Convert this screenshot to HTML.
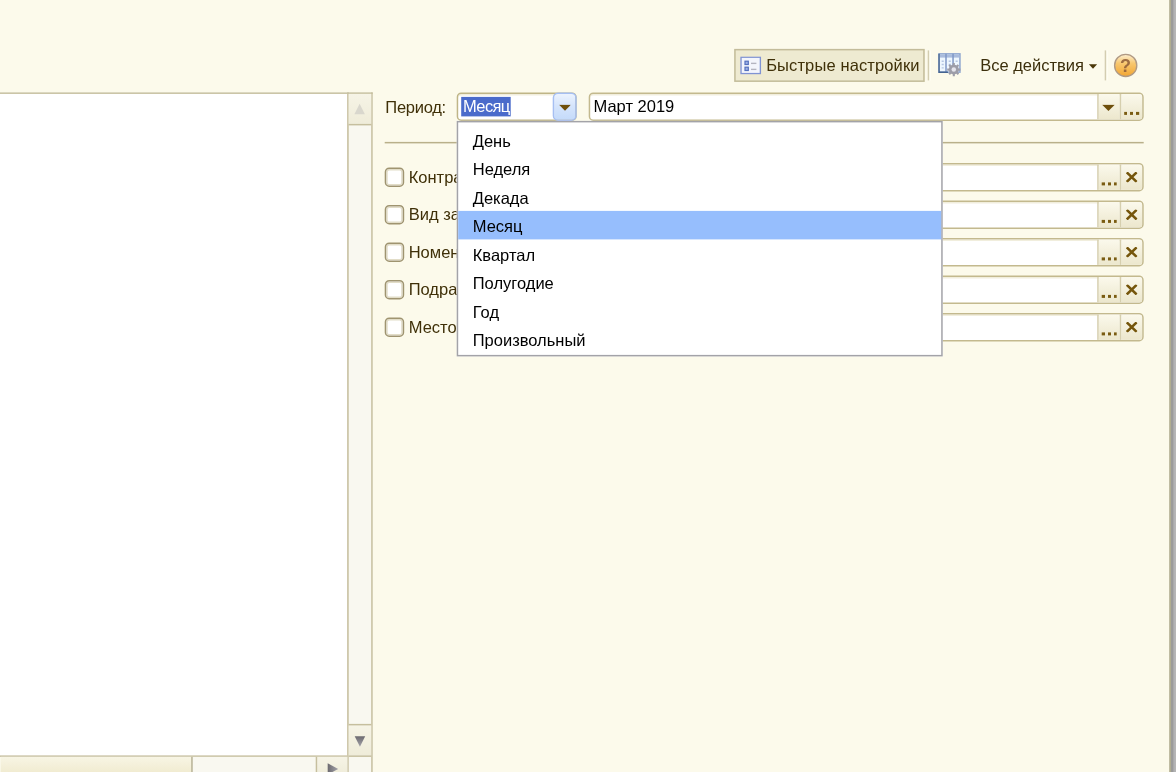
<!DOCTYPE html>
<html lang="ru">
<head>
<meta charset="utf-8">
<title>Отчет</title>
<style>
html,body{margin:0;padding:0;}
body{width:1176px;height:772px;overflow:hidden;background:#fcfaeb;position:relative;}
#root{position:absolute;left:0;top:0;width:784px;height:516px;transform:translate(0.7px,-0.6px) scale(1.5);transform-origin:0 0;will-change:transform;font-family:"Liberation Sans",sans-serif;font-size:11px;color:#3f3008;}
#root div,#root span,#root svg{position:absolute;box-sizing:border-box;}
.t{white-space:nowrap;line-height:19px;height:19px;margin-top:0.6px;}
/* window edge */
#edge{left:779px;top:-1px;width:6px;height:518px;background:linear-gradient(90deg,#b0ad90 0,#b0ad90 1px,#9b9b9a 1px,#9b9b9a 2.3px,#b1b1b4 3.2px,#b9b9b6 5px);}
/* left panel */
#panel{left:-3px;top:62px;width:235px;height:443px;background:#fff;border:1px solid #c6bf9e;}
#vsb{left:231px;top:62px;width:17px;height:456px;background:#f9f8f0;border:1px solid #c6bf9e;border-bottom:none;}
.sb{background:linear-gradient(#f6f4e6,#efecd9);}
#vup{left:0;top:0;width:15px;height:21px;border-bottom:1px solid #c6bf9e;}
#vdn{left:0;top:420px;width:15px;height:22px;border-top:1px solid #c6bf9e;border-bottom:1px solid #c6bf9e;}
#hsb{left:0;top:505px;width:231px;height:12px;background:#f9f8f0;}
#hth{left:0;top:0;width:128px;height:12px;background:linear-gradient(#f8f5e4,#eee8ca 14px);border-right:1px solid #b7b193;}
#hrt{left:210px;top:0;width:21px;height:12px;border-left:1px solid #c6bf9e;}
/* toolbar */
#qb{left:489px;top:33px;width:127px;height:22px;background:#eeead1;border:1px solid #c3bc9a;}
.vs{width:1px;background:#d3cdb0;box-shadow:1px 0 0 #fffef6;}
/* fields */
.f{height:19px;background:#fff;border:1px solid #c3b98e;border-radius:3px;box-shadow:inset 0 1px 0 #f1eedd;overflow:hidden;}
.b{top:0;height:17px;background:linear-gradient(#fbf9ec,#ece7cd);border-left:1px solid #d6cfae;}
.dots{left:3px;top:12px;width:10px;height:2px;background:linear-gradient(90deg,#7a5c12 0,#7a5c12 2px,transparent 2px,transparent 4px,#7a5c12 4px,#7a5c12 6px,transparent 6px,transparent 8px,#7a5c12 8px,#7a5c12 10px);}
.cb{left:256px;width:13px;height:13px;border:1px solid #9f9470;border-radius:3px;background:#fff;box-shadow:inset 0 0 0 1px #e2ddc8;}
.lb{left:272px;margin-top:0;transform:translateY(0.35px);}
#hr{left:255.5px;top:95px;width:506px;height:1px;background:#b9b08a;}
/* popup */
#pop{left:304.2px;top:81.1px;width:324px;height:157px;background:#fff;border:1px solid #a3a3a8;}
#pop div{left:0;width:322px;height:19px;}
#pop span{left:9.5px;top:1px;color:#000;white-space:nowrap;line-height:19px;transform:translateY(0.35px);}
</style>
</head>
<body>
<div id="root">
<div id="edge"></div>
<div id="panel"></div>
<div id="vsb">
  <div id="vup" class="sb"><svg width="15" height="20" viewBox="0 0 15 20"><path d="M7.3 6.6 L10.8 13.6 L3.8 13.6 Z" fill="#d9d7cd"/></svg></div>
  <div id="vdn" class="sb"><svg width="15" height="22" viewBox="0 0 15 22" style="top:-1px"><defs><linearGradient id="ag1" x1="0" y1="0" x2="0" y2="1"><stop offset="0" stop-color="#6c6a70"/><stop offset="1" stop-color="#a3a2a8"/></linearGradient></defs><path d="M4 8.2 L11 8.2 L7.5 15.2 Z" fill="url(#ag1)"/></svg></div>
</div>
<div id="hsb">
  <div id="hth"></div>
  <div id="hrt" class="sb"><svg width="20" height="12" viewBox="0 0 20 12"><defs><linearGradient id="ag2" x1="0" y1="0" x2="1" y2="0"><stop offset="0" stop-color="#6c6a70"/><stop offset="1" stop-color="#a3a2a8"/></linearGradient></defs><path d="M7 4.3 L14 8 L7 11.7 Z" fill="url(#ag2)"/></svg></div>
</div>

<!-- toolbar -->
<div id="qb">
  <svg width="14" height="12" viewBox="0 0 14 12" style="left:3px;top:4px"><rect x="0.5" y="0.5" width="13" height="11" fill="#f3f5fc" stroke="#8093d3"/><rect x="3.2" y="3.2" width="2.2" height="2.2" fill="#9db2e6" stroke="#5570bd" stroke-width="0.8"/><rect x="3.2" y="7.2" width="2.2" height="2.2" fill="#9db2e6" stroke="#5570bd" stroke-width="0.8"/><rect x="7.2" y="4.2" width="3.6" height="0.9" fill="#b4b4c0"/><rect x="7.2" y="8.2" width="3.6" height="0.9" fill="#b4b4c0"/></svg>
  <span class="t" style="left:20.3px;top:0.5px;letter-spacing:0.08px;">Быстрые настройки</span>
</div>
<div class="vs" style="left:618px;top:34px;height:20px;"></div>
<svg width="17" height="18" viewBox="0 0 17 18" style="left:625px;top:35px">
  <rect x="0.5" y="1.3" width="14" height="12.2" fill="#eef7fe" stroke="#8fa6cf"/>
  <rect x="1" y="1.8" width="13" height="2" fill="#a9bbdc"/>
  <path d="M5.2 1.3V13.5M9.9 1.3V13.5" stroke="#7f97c6" stroke-width="1"/>
  <path d="M2.3 6.2h1.4M2.3 8.4h1.4M2.3 10.6h1.4M7 6.2h1.4M7 8.4h1.4M11.6 6.2h1.4" stroke="#b5c6e2" stroke-width="0.9"/>
  <path d="M0.5 1.3V13.5H6.5" stroke="#44638f" fill="none" stroke-width="1"/>
  <g transform="translate(10.4,11.8)"><circle r="3.3" fill="#9d9da8"/><g stroke="#9d9da8" stroke-width="1.4"><path d="M0 -4.4V4.4M-4.4 0H4.4M-3.1 -3.1L3.1 3.1M-3.1 3.1L3.1 -3.1"/></g><circle r="1.5" fill="#e4e4ec"/></g>
</svg>
<span class="t" style="left:653px;top:34px;color:#3c2f0c;">Все действия</span>
<svg width="6.4" height="4.6" viewBox="0 0 7 5" style="left:724.9px;top:42.6px"><path d="M0.5 0.3H6.5L3.5 3.6Z" fill="#4a3608"/></svg>
<div class="vs" style="left:736px;top:34px;height:20px;"></div>
<svg width="18" height="18" viewBox="0 0 18 18" style="left:741.3px;top:34.5px">
  <defs><linearGradient id="hg" x1="0" y1="0" x2="0" y2="1"><stop offset="0" stop-color="#fdf0d2"/><stop offset="0.4" stop-color="#f8c870"/><stop offset="1" stop-color="#f2a531"/></linearGradient></defs>
  <circle cx="9" cy="9" r="7.4" fill="url(#hg)" stroke="#b09a84" stroke-width="0.9"/>
  <text x="8.9" y="13.2" text-anchor="middle" font-family="Liberation Sans, sans-serif" font-size="12" font-weight="bold" fill="#94623a" fill-opacity="0.9">?</text>
</svg>

<!-- period row -->
<span class="t" style="left:256.4px;top:62px;letter-spacing:-0.18px;">Период:</span>
<div class="f" style="left:304px;top:62px;width:80px;border-color:#bfb587;">
  <div style="left:2px;top:2px;width:33px;height:13px;background:#4a6bcb;"></div>
  <span class="t" style="left:3.2px;top:-1.2px;color:#fff;letter-spacing:-0.4px;">Месяц</span>
</div>
<div style="left:368px;top:62px;width:16px;height:19px;border:1px solid #a6bff2;border-radius:3.5px;background:linear-gradient(#ecf3fe,#d6e5fc 45%,#c5dbfa);"></div>
<svg width="8.4" height="4.6" viewBox="0 0 9 5" style="left:371.7px;top:70px"><path d="M0.2 0.2H8.8L4.5 4.6Z" fill="#6e4f0c"/></svg>
<div class="f" style="left:392px;top:62px;width:370px;">
  <span class="t" style="left:2.2px;top:-1.4px;color:#000;">Март 2019</span>
  <div class="b" style="left:338px;width:15px;"><svg width="9" height="5" viewBox="0 0 9 5" style="left:2.3px;top:7px"><path d="M0.3 0.3H8.7L4.5 4.4Z" fill="#6e4f0c"/></svg></div>
  <div class="b" style="left:353px;width:15px;"><div class="dots" style="left:2px"></div></div>
</div>
<div id="hr"></div>

<!-- filter rows -->
<div class="cb" style="top:112px"></div><span class="t lb" style="top:109px">Контрагент</span>
<div class="cb" style="top:137px"></div><span class="t lb" style="top:134px">Вид затрат</span>
<div class="cb" style="top:162px"></div><span class="t lb" style="top:159px">Номенклатура</span>
<div class="cb" style="top:187px"></div><span class="t lb" style="top:184px">Подразделение</span>
<div class="cb" style="top:212px"></div><span class="t lb" style="top:209px">Место хранения</span>
<div class="f r" style="left:392px;top:109px;width:370px;"><div class="b" style="left:338px;width:15px;"><div class="dots" style="left:2px"></div></div><div class="b x" style="left:353px;width:15px;"><svg width="8" height="7" viewBox="0 0 8 7" style="left:3px;top:5px"><path d="M0.7 0.3L7.3 6.7M7.3 0.3L0.7 6.7" stroke="#75560c" stroke-width="1.7" fill="none"/></svg></div></div>
<div class="f r" style="left:392px;top:134px;width:370px;"><div class="b" style="left:338px;width:15px;"><div class="dots" style="left:2px"></div></div><div class="b x" style="left:353px;width:15px;"><svg width="8" height="7" viewBox="0 0 8 7" style="left:3px;top:5px"><path d="M0.7 0.3L7.3 6.7M7.3 0.3L0.7 6.7" stroke="#75560c" stroke-width="1.7" fill="none"/></svg></div></div>
<div class="f r" style="left:392px;top:159px;width:370px;"><div class="b" style="left:338px;width:15px;"><div class="dots" style="left:2px"></div></div><div class="b x" style="left:353px;width:15px;"><svg width="8" height="7" viewBox="0 0 8 7" style="left:3px;top:5px"><path d="M0.7 0.3L7.3 6.7M7.3 0.3L0.7 6.7" stroke="#75560c" stroke-width="1.7" fill="none"/></svg></div></div>
<div class="f r" style="left:392px;top:184px;width:370px;"><div class="b" style="left:338px;width:15px;"><div class="dots" style="left:2px"></div></div><div class="b x" style="left:353px;width:15px;"><svg width="8" height="7" viewBox="0 0 8 7" style="left:3px;top:5px"><path d="M0.7 0.3L7.3 6.7M7.3 0.3L0.7 6.7" stroke="#75560c" stroke-width="1.7" fill="none"/></svg></div></div>
<div class="f r" style="left:392px;top:209px;width:370px;"><div class="b" style="left:338px;width:15px;"><div class="dots" style="left:2px"></div></div><div class="b x" style="left:353px;width:15px;"><svg width="8" height="7" viewBox="0 0 8 7" style="left:3px;top:5px"><path d="M0.7 0.3L7.3 6.7M7.3 0.3L0.7 6.7" stroke="#75560c" stroke-width="1.7" fill="none"/></svg></div></div>

<!-- popup list -->
<div id="pop">
  <div style="top:2px"><span>День</span></div>
  <div style="top:21px"><span>Неделя</span></div>
  <div style="top:40px"><span>Декада</span></div>
  <div style="top:59px;background:#96befd"><span>Месяц</span></div>
  <div style="top:78px"><span>Квартал</span></div>
  <div style="top:97px"><span>Полугодие</span></div>
  <div style="top:116px"><span>Год</span></div>
  <div style="top:135px"><span>Произвольный</span></div>
</div>
</div>
</body>
</html>
